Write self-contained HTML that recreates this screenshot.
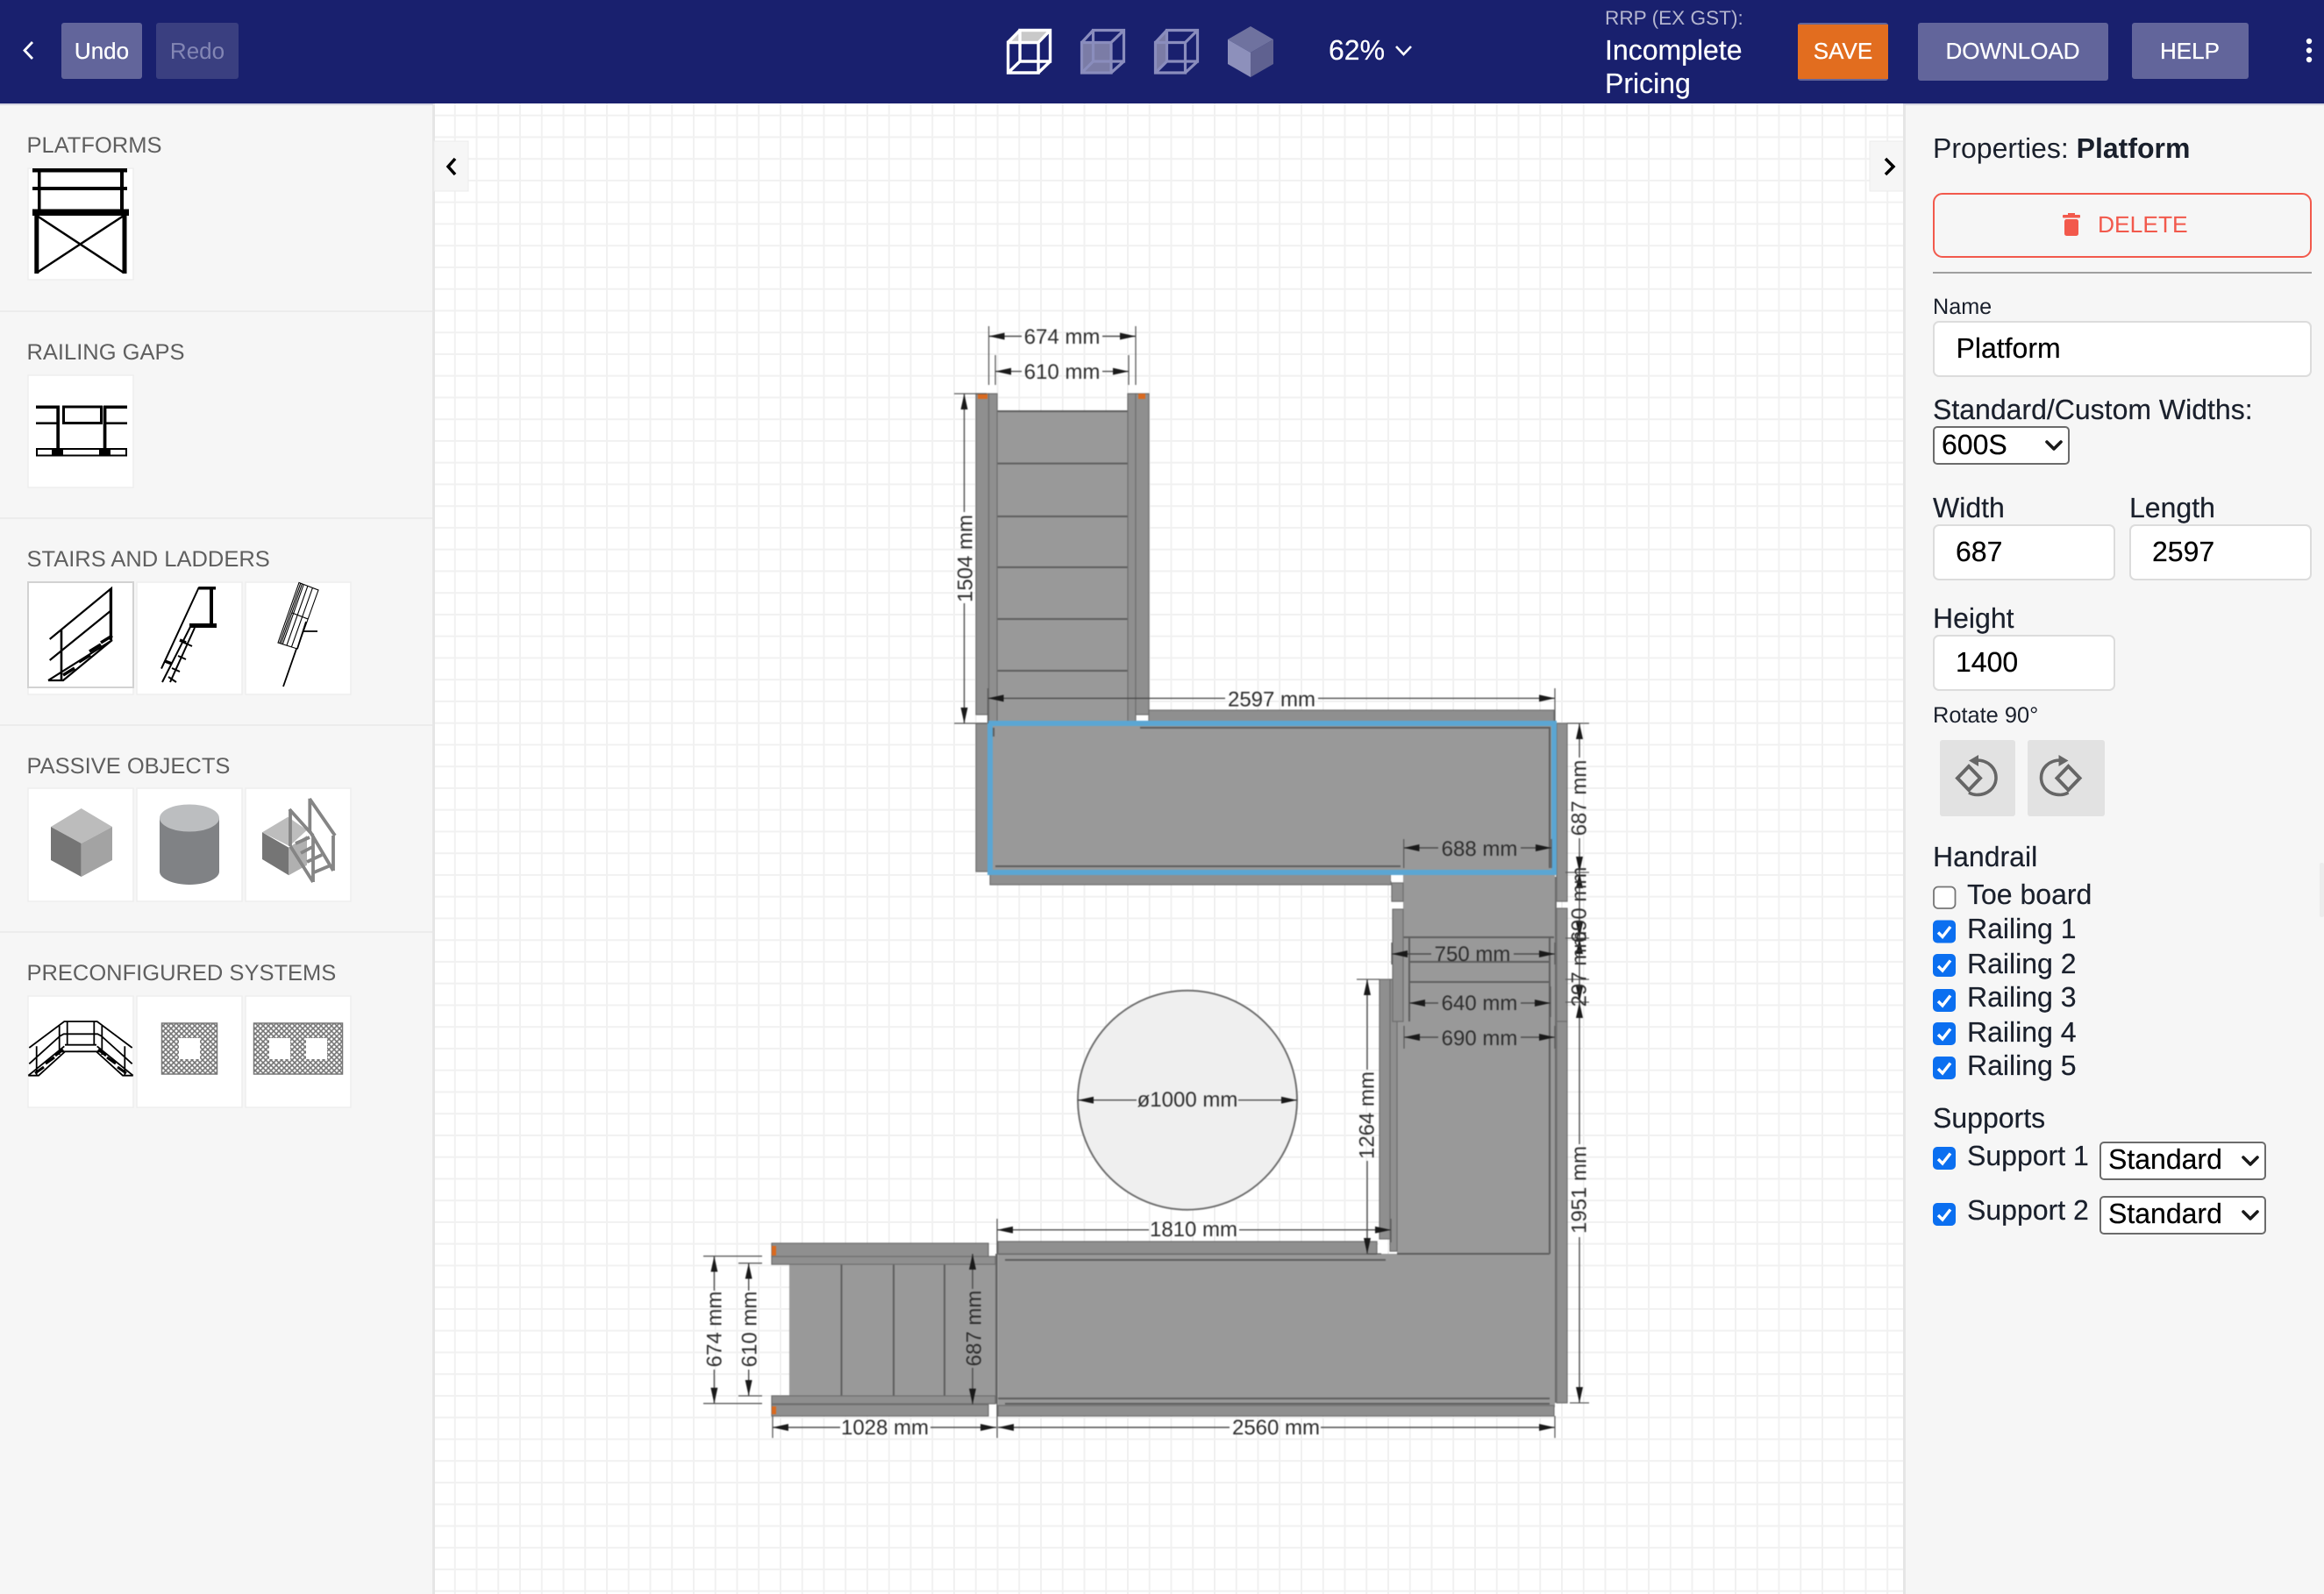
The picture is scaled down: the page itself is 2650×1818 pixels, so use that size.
<!DOCTYPE html>
<html lang="en"><head><meta charset="utf-8"><title>Platform configurator</title>
<style>
html,body{margin:0;padding:0;background:#fff}
body{width:2650px;height:1818px;overflow:hidden;position:relative;font-family:"Liberation Sans",sans-serif}
#grid{position:absolute;left:494px;top:118px;width:1678px;height:1700px;background-color:#fff;
background-image:linear-gradient(to right,#f1f1f1 2px,transparent 2px),linear-gradient(to bottom,#f1f1f1 2px,transparent 2px);
background-size:24.75px 24.75px;background-position:-1px 12.7px}
svg{position:absolute;left:0;top:0}
text{font-family:"Liberation Sans",sans-serif;text-rendering:geometricPrecision}
.h{font-size:25.5px;fill:#5f5f5f}
.w{fill:#fff;font-size:26px;stroke:#fff;stroke-width:.25px}
.l{font-size:32px;fill:#1a202c;stroke:#1a202c;stroke-width:.2px}
.v{font-size:32px;fill:#000;stroke:#000;stroke-width:.2px}
.tile{fill:#fff;stroke:#eeeeee;stroke-width:1.5}
.inp{fill:#fff;stroke:#dcdcdc;stroke-width:2}
.sel{fill:#fff;stroke:#6b6b6b;stroke-width:2}
.chev{fill:none;stroke:#1a1a1a;stroke-width:3.6;stroke-linecap:round;stroke-linejoin:round}
.k{stroke:#000;fill:none}
.band{fill:#8f8f8f;stroke:#6e6e6e;stroke-width:1.2}
.m{fill:#999;stroke:none}
.tr{stroke:#5e5e5e;stroke-width:2;fill:none}
.d{stroke:#4a4a4a;stroke-width:1.4;fill:none}
.x{stroke:#5a5a5a;stroke-width:1.3;fill:none}
.dt{font-size:24px;fill:#2e2e2e;text-anchor:middle}
</style></head><body>
<div id="grid"></div>
<svg width="2650" height="1818" viewBox="0 0 2650 1818" xmlns="http://www.w3.org/2000/svg">
<defs>
<marker id="a" markerUnits="userSpaceOnUse" markerWidth="18" markerHeight="8" refX="18" refY="4" orient="auto-start-reverse"><path d="M0 0L18 4L0 8z" fill="#1a1a1a"/></marker>
<pattern id="hatch" width="6" height="6" patternUnits="userSpaceOnUse"><rect width="6" height="6" fill="#fff"/><path d="M0 0L6 6M6 0L0 6" stroke="#777" stroke-width="1.6"/></pattern>
<g id="cb"><rect width="26" height="26" rx="5" fill="#0b6ff0"/><path d="M6 14L11 19L20 7.500" fill="none" stroke="#fff" stroke-width="3.400"/></g>
</defs>

<!-- left sidebar -->
<rect x="0" y="118" width="494" height="1700" fill="#f6f6f6"/>
<rect x="493" y="118" width="3" height="1700" fill="#e6e6e6"/>
<g fill="#ececec"><rect y="354" width="493" height="2"/><rect y="590" width="493" height="2"/><rect y="826" width="493" height="2"/><rect y="1062" width="493" height="2"/></g>
<text class="h" x="30.500" y="174">PLATFORMS</text>
<text class="h" x="30.500" y="410">RAILING GAPS</text>
<text class="h" x="30.500" y="646">STAIRS AND LADDERS</text>
<text class="h" x="30.500" y="882">PASSIVE OBJECTS</text>
<text class="h" x="30.500" y="1118">PRECONFIGURED SYSTEMS</text>
<rect class="tile" x="32" y="192" width="120" height="127"/>
<rect class="tile" x="32" y="428" width="120" height="128"/>
<rect class="tile" x="32" y="664" width="120" height="128"/><rect x="32" y="664" width="120" height="120" fill="#fff" stroke="#d2d2d2" stroke-width="2"/>
<rect class="tile" x="156" y="664" width="120" height="128"/><rect class="tile" x="280" y="664" width="120" height="128"/>
<rect class="tile" x="32" y="899" width="120" height="129"/><rect class="tile" x="156" y="899" width="120" height="129"/><rect class="tile" x="280" y="899" width="120" height="129"/>
<rect class="tile" x="32" y="1136" width="120" height="127"/><rect class="tile" x="156" y="1136" width="120" height="127"/><rect class="tile" x="280" y="1136" width="120" height="127"/>

<!-- platform icon -->
<g fill="#000"><rect x="37" y="192" width="108" height="4.500"/><rect x="37" y="213" width="108" height="4"/><rect x="43" y="196" width="3.500" height="44"/><rect x="137" y="196" width="4" height="44"/><rect x="37" y="238.500" width="110" height="7.500"/><rect x="39.300" y="246" width="5" height="66"/><rect x="139.500" y="246" width="5" height="66"/></g>
<path class="k" stroke-width="2.500" d="M42 246L141 311M141 246L42 311"/>
<!-- railing gap icon -->
<g fill="#000"><rect x="41" y="462.500" width="27" height="3.500"/><rect x="41" y="481.400" width="27" height="2.600"/><rect x="64.300" y="463" width="3.700" height="50"/><rect x="117.700" y="463" width="3.700" height="50"/><rect x="118" y="462.500" width="27" height="3.500"/><rect x="118" y="481.400" width="27" height="2.600"/><rect x="59" y="511" width="13" height="9"/><rect x="113" y="511" width="13" height="9"/></g>
<rect class="k" stroke-width="3" x="72.500" y="464" width="43" height="18.500"/>
<rect class="k" stroke-width="2" x="42" y="512" width="102" height="7.500"/>
<!-- stair icon 1 -->
<path class="k" stroke-width="2.200" d="M56.700 729L127 671V730M56.700 753L127 696M70 718V776M55 776L128 730M55 776H72L128 730"/>
<path class="k" stroke-width="3.500" d="M72 770L85 762M90 755L103 747M102 743L115 735M115 733L128 725"/>
<path class="k" stroke-width="2.500" d="M126 671V730M70 718V776"/>
<!-- stair icon 2 -->
<rect x="227" y="669" width="19" height="3.500"/><rect x="239" y="672" width="4" height="40"/><rect x="216" y="711" width="31" height="5"/>
<path class="k" stroke-width="2" d="M227 669.500L184 762.600M218 713L185 778M222 716L194 778M192 772L201 778M196 762L205 766M203 748L212 752M210 733L219 737"/>
<path class="k" stroke-width="3.500" d="M205 730L212 733M188 754L196 757"/>
<!-- stair icon 3 -->
<path class="k" stroke-width="1.100" d="M341 664.500L363 673L339 740L317 733zM342.800 665.200L318.800 733.600M344.500 665.900L320.500 734.100M346.300 666.500L322.300 734.700M350.900 668.300L326.900 736.200M356.400 670.500L332.400 737.900M333 699L350.700 705.800"/>
<path class="k" stroke-width="1.800" d="M338 740L323 783M345 720H362M349 709L339 740"/>
<!-- cube -->
<path d="M92.700 922L128 943L92.700 962L58 943z" fill="#bcbcbc"/><path d="M58 943L92.700 962V1000L58 981z" fill="#757575"/><path d="M92.700 962L128 943V981L92.700 1000z" fill="#a3a3a3"/>
<!-- cylinder -->
<path d="M182 933V994C182 1002 197 1009 216 1009S250 1002 250 994V933z" fill="#808285"/><ellipse cx="216" cy="933" rx="34" ry="15.500" fill="#bcbec0"/>
<!-- cube + stairs -->
<path d="M299 949.300L328.300 931.700L350 946.700L330 965z" fill="#bdbdbd"/><path d="M299 949.300L329.300 966.700V998.300L299 980z" fill="#757575"/><path d="M329.300 966.700L350 953V986.700L329.300 998.300z" fill="#b0b0b0"/>
<path fill="none" stroke="#858585" stroke-width="3.800" d="M331 923V965M353.300 910.700V948M330 923L357 953M353 911L382 953M331 965L357 1006M353.300 948L380 993M357 953V1006M380 953V993M337 962L353 955M343 973L358 965M350 983L367 975M358 995L377 987"/>
<!-- preconfigured 1 -->
<g id="pc"><path class="k" stroke-width="1.800" d="M33.300 1195L73.300 1165H92M33.300 1213.300L68.300 1181.700L72.700 1179.300H92M41.700 1193.300V1226.700M67.700 1170V1203M76.700 1165V1192M32.300 1226.700L73.300 1193.300M32.300 1226.700H44L74 1199.500M74 1191.700H92M70 1199.300H92"/><path class="k" stroke-width="3" d="M40 1224L50 1217M52 1213L62 1206M63 1204L72 1197"/></g>
<use href="#pc" transform="translate(184 0) scale(-1 1)"/>
<!-- mesh -->
<rect x="184.500" y="1167" width="63" height="58" fill="url(#hatch)" stroke="#777" stroke-width="1.500"/><rect x="204" y="1184" width="24" height="24" fill="#fff"/>
<rect x="289.500" y="1167" width="101" height="58" fill="url(#hatch)" stroke="#777" stroke-width="1.500"/><rect x="307" y="1184" width="24" height="24" fill="#fff"/><rect x="349" y="1184" width="24" height="24" fill="#fff"/>

<!-- collapse tabs -->
<rect x="495" y="161" width="39" height="57" fill="#f6f6f6" stroke="#ececec"/>
<path d="M519 181L511 190L519 199" fill="none" stroke="#000" stroke-width="3.500"/>
<rect x="2132" y="161" width="39" height="57" fill="#f6f6f6" stroke="#ececec"/>
<path d="M2150 181L2159 190L2150 199" fill="none" stroke="#000" stroke-width="3.500"/>

<!-- drawing -->
<g style="filter:blur(.6px)">
<!-- top stair -->
<rect class="m" x="1137" y="469" width="149" height="356"/><path class="tr" d="M1137 469H1286"/>
<path class="tr" d="M1137 528.600H1286M1137 589H1286M1137 647H1286M1137 706H1286M1137 765H1286"/>
<rect class="band" x="1113" y="449" width="14.500" height="366"/><rect class="band" x="1127.500" y="449" width="9.500" height="376"/>
<rect class="band" x="1286" y="449" width="9" height="376"/><rect class="band" x="1295" y="449" width="15" height="366"/>
<rect x="1115" y="449" width="11" height="6" fill="#d9691f"/><rect x="1298" y="449" width="8" height="6" fill="#d9691f"/>
<rect x="1300" y="816" width="10" height="8" fill="#fff"/>
<!-- upper platform -->
<rect class="band" x="1310" y="810" width="462" height="15"/>
<rect class="band" x="1113" y="825" width="16" height="169"/>
<rect class="m" x="1129" y="825" width="643" height="170"/>
<rect class="band" x="1129" y="995" width="457" height="14"/>
<path class="tr" d="M1300 830H1767V990M1133 830V840M1135 988H1597"/>
<rect class="band" x="1775" y="825" width="12" height="203"/>
<!-- vertical run -->
<rect class="m" x="1600" y="995" width="173" height="175"/>
<rect class="m" x="1593" y="1165" width="180" height="265"/>
<path class="tr" d="M1600 1069H1772M1607 1097H1767M1607 1120H1767M1607 1069V1165M1767 1069V1595"/>
<rect x="1586" y="995" width="14" height="10" fill="#fff"/>
<rect class="band" x="1587" y="1007" width="13" height="21"/>
<rect class="band" x="1585" y="1117" width="8" height="310"/>
<rect class="band" x="1588" y="1037" width="12" height="128"/>
<rect x="1773" y="1000" width="2" height="600" fill="#6e6e6e"/>
<rect class="band" x="1775" y="1036" width="12" height="129"/>
<rect class="band" x="1775" y="1165" width="12" height="435"/>
<rect class="band" x="1573" y="1117" width="12" height="296"/>
<!-- lower platform -->
<rect class="m" x="1138" y="1430" width="635" height="175"/>
<path class="tr" d="M1593 1430H1767M1138 1430H1570M1146 1437H1580M1138 1595H1767M1146 1601H1767"/>
<rect class="band" x="1138" y="1416" width="432" height="14"/>
<rect class="band" x="1138" y="1603" width="634" height="12"/>
<rect x="1572" y="1415" width="10" height="12" fill="#fff"/>
<!-- left stair -->
<rect class="m" x="900" y="1442" width="236" height="150"/>
<path class="tr" d="M959.500 1442V1592M1019 1442V1592M1077 1442V1592"/>
<rect class="band" x="880" y="1433" width="255" height="9"/><rect class="band" x="880" y="1592" width="255" height="9"/>
<rect class="band" x="880" y="1418" width="247" height="15"/><rect class="band" x="880" y="1602" width="247" height="13"/>
<rect x="880" y="1421" width="5" height="11" fill="#d9691f"/><rect x="880" y="1604" width="5" height="9" fill="#d9691f"/>
<path d="M1136 1430V1601" stroke="#6a6a6a" stroke-width="2"/>
<!-- selection -->
<rect x="1129" y="825" width="643" height="170" fill="none" stroke="#5ba6d3" stroke-width="6"/>
<!-- circle -->
<circle cx="1354" cy="1254.700" r="125" fill="#efefef" stroke="#6e6e6e" stroke-width="2"/>
<!-- extension lines -->
<path class="x" d="M1127.500 372V439M1295 372V439M1135 405V439M1287 405V439M1088 449H1125M1088 825H1125M1773 785V822M1126.500 785V825M1787 825H1812M1785 995H1812M1785 1070H1812M1785 1117H1812M1785 1143H1812M1790 1600H1812M1600.700 957V990M1769 957V990M1587 1075V1100M1773 1075V1100M1607 1125V1160M1768 1125V1160M1601 1170V1196M1773 1170V1196M1547 1117H1573M1559 1430H1575M1137 1390V1640M1586 1390V1417M881 1615V1640M1773 1615V1640M802 1432.700H869M802 1600.700H869M842 1440.700H869M842 1592H869"/>
<!-- dimension lines -->
<g class="d">
<path marker-start="url(#a)" d="M1127.500 383.500H1165"/><path marker-end="url(#a)" d="M1257 383.500H1295"/>
<path marker-start="url(#a)" d="M1135 423.600H1165"/><path marker-end="url(#a)" d="M1257 423.600H1287"/>
<path marker-start="url(#a)" d="M1099.500 449V584"/><path marker-end="url(#a)" d="M1099.500 688V825"/>
<path marker-start="url(#a)" d="M1126.500 796.400H1397"/><path marker-end="url(#a)" d="M1503 796.400H1773"/>
<path marker-start="url(#a)" d="M1801 825V864"/><path marker-end="url(#a)" d="M1801 956V995"/>
<path marker-start="url(#a)" d="M1600.700 967H1640"/><path marker-end="url(#a)" d="M1734 967H1769"/>
<path marker-start="url(#a)" d="M1587 1088H1632"/><path marker-end="url(#a)" d="M1726 1088H1773"/>
<path marker-start="url(#a)" d="M1607 1144H1640"/><path marker-end="url(#a)" d="M1734 1144H1768"/>
<path marker-start="url(#a)" d="M1601 1183H1640"/><path marker-end="url(#a)" d="M1734 1183H1773"/>
<path marker-start="url(#a)" marker-end="url(#a)" d="M1801 995V1070"/>
<path marker-start="url(#a)" marker-end="url(#a)" d="M1801 1070V1143"/>
<path marker-start="url(#a)" d="M1801 1143V1305"/><path marker-end="url(#a)" d="M1801 1411V1600"/>
<path marker-start="url(#a)" d="M1559 1117V1220"/><path marker-end="url(#a)" d="M1559 1324V1430"/>
<path marker-start="url(#a)" d="M1137 1402.700H1310"/><path marker-end="url(#a)" d="M1413 1402.700H1586"/>
<path marker-start="url(#a)" d="M881 1628H958"/><path marker-end="url(#a)" d="M1061 1628H1136"/>
<path marker-start="url(#a)" d="M1138 1628H1402"/><path marker-end="url(#a)" d="M1506 1628H1773"/>
<path marker-start="url(#a)" d="M814.400 1432.700V1472"/><path marker-end="url(#a)" d="M814.400 1562V1600.700"/>
<path marker-start="url(#a)" d="M853.700 1440.700V1472"/><path marker-end="url(#a)" d="M853.700 1562V1592"/>
<path marker-start="url(#a)" d="M1109 1430V1470"/><path marker-end="url(#a)" d="M1109 1560V1601.700"/>
<path marker-start="url(#a)" d="M1229 1254.700H1296"/><path marker-end="url(#a)" d="M1412 1254.700H1479"/>
</g>
<!-- dimension text -->
<text class="dt" x="1211" y="392">674 mm</text>
<text class="dt" x="1211" y="432">610 mm</text>
<text class="dt" x="1450" y="805.500">2597 mm</text>
<text class="dt" x="1687" y="976">688 mm</text>
<text class="dt" x="1679" y="1096">750 mm</text>
<text class="dt" x="1687" y="1152">640 mm</text>
<text class="dt" x="1687" y="1192">690 mm</text>
<text class="dt" x="1361" y="1410">1810 mm</text>
<text class="dt" x="1009" y="1636">1028 mm</text>
<text class="dt" x="1455" y="1636">2560 mm</text>
<text class="dt" x="1354" y="1262">ø1000 mm</text>
<text class="dt" transform="translate(1100 637) rotate(-90)" dy=".35em">1504 mm</text>
<text class="dt" transform="translate(1800 910) rotate(-90)" dy=".35em">687 mm</text>
<text class="dt" transform="translate(1800 1032) rotate(-90)" dy=".35em">690 mm</text>
<text class="dt" transform="translate(1800 1105) rotate(-90)" dy=".35em">297 mm</text>
<text class="dt" transform="translate(1800 1357) rotate(-90)" dy=".35em">1951 mm</text>
<text class="dt" transform="translate(1558 1272) rotate(-90)" dy=".35em">1264 mm</text>
<text class="dt" transform="translate(814 1516) rotate(-90)" dy=".35em">674 mm</text>
<text class="dt" transform="translate(854 1516) rotate(-90)" dy=".35em">610 mm</text>
<text class="dt" transform="translate(1110 1515) rotate(-90)" dy=".35em">687 mm</text>
</g>

<!-- right panel -->
<rect x="2170" y="118" width="480" height="1700" fill="#f6f6f6"/>
<rect x="2170" y="118" width="3" height="1700" fill="#e6e6e6"/>
<rect x="2645" y="984" width="5" height="62" rx="2" fill="#ececec"/>
<text x="2204" y="180" font-size="32" fill="#1a202c">Properties: <tspan font-weight="700">Platform</tspan></text>
<rect x="2205" y="221" width="430" height="72" rx="10" fill="none" stroke="#f2594c" stroke-width="2"/>
<g fill="#f2594c"><rect x="2352" y="245" width="20" height="3.500" rx="1"/><rect x="2358" y="243" width="8" height="3"/><rect x="2354" y="250" width="16" height="19" rx="2.500"/></g>
<text x="2392" y="265" font-size="26.400" fill="#f2594c">DELETE</text>
<rect x="2204" y="310" width="432" height="2" fill="#a0a0a0"/>
<text x="2204" y="358" font-size="25.200px" fill="#1a202c">Name</text>
<rect class="inp" x="2205" y="367" width="430" height="62" rx="6"/>
<text class="v" x="2230.500" y="408">Platform</text>
<text class="l" x="2204" y="478">Standard/Custom Widths:</text>
<rect class="sel" x="2205" y="487" width="154" height="42" rx="4"/>
<text class="v" x="2214" y="518">600S</text>
<path class="chev" d="M2334 504L2342 512L2350 504"/>
<text class="l" x="2204" y="590">Width</text>
<text class="l" x="2428" y="590">Length</text>
<rect class="inp" x="2205" y="599" width="206" height="62" rx="6"/>
<rect class="inp" x="2429" y="599" width="206" height="62" rx="6"/>
<text class="v" x="2230" y="640">687</text>
<text class="v" x="2454" y="640">2597</text>
<text class="l" x="2204" y="716">Height</text>
<rect class="inp" x="2205" y="725" width="206" height="62" rx="6"/>
<text class="v" x="2230" y="766">1400</text>
<text x="2204" y="824" font-size="25.400px" fill="#1a202c">Rotate 90°</text>
<rect x="2212" y="844" width="86" height="87" rx="3" fill="#e2e2e2"/>
<rect x="2312" y="844" width="88" height="87" rx="3" fill="#e2e2e2"/>
<g id="rot"><path d="M2232 887.500L2245 874L2258 887.500L2245 901z" fill="none" stroke="#666" stroke-width="4"/><path d="M2254 867C2267 867 2276 876 2276 887S2267 906.500 2254 906.500C2250 906.500 2247 905 2245 904" fill="none" stroke="#666" stroke-width="3.600"/><path d="M2256 861L2245 867.500L2256 874z" fill="#666"/></g>
<use href="#rot" transform="translate(4603.500 0) scale(-1 1)"/>
<text class="l" x="2204" y="988">Handrail</text>
<rect x="2205" y="1011.500" width="24.500" height="24.500" rx="5" fill="#fff" stroke="#767676" stroke-width="1.800"/>
<text class="l" x="2243" y="1031">Toe board</text>
<use href="#cb" x="2204" y="1049.500"/><text class="l" x="2243" y="1070">Railing 1</text>
<use href="#cb" x="2204" y="1088"/><text class="l" x="2243" y="1110">Railing 2</text>
<use href="#cb" x="2204" y="1128"/><text class="l" x="2243" y="1148">Railing 3</text>
<use href="#cb" x="2204" y="1166"/><text class="l" x="2243" y="1188">Railing 4</text>
<use href="#cb" x="2204" y="1205"/><text class="l" x="2243" y="1226">Railing 5</text>
<text class="l" x="2204" y="1286">Supports</text>
<use href="#cb" x="2204" y="1308"/><text class="l" x="2243" y="1329">Support 1</text>
<use href="#cb" x="2204" y="1372"/><text class="l" x="2243" y="1391">Support 2</text>
<rect class="sel" x="2395" y="1303" width="188" height="42" rx="4"/><text class="v" x="2404" y="1333">Standard</text><path class="chev" d="M2558 1320L2566 1328L2574 1320"/>
<rect class="sel" x="2395" y="1365" width="188" height="42" rx="4"/><text class="v" x="2404" y="1395">Standard</text><path class="chev" d="M2558 1382L2566 1390L2574 1382"/>

<!-- header -->
<rect width="2650" height="118" fill="#19206e"/>
<rect y="118" width="494" height="2" fill="#d6d6e2"/><rect x="2170" y="118" width="480" height="2" fill="#d6d6e2"/>
<path d="M37 48L28 57.500L37 67" fill="none" stroke="#fff" stroke-width="2.800"/>
<rect x="70" y="26" width="92" height="64" rx="3" fill="#62659b"/><text class="w" x="116" y="67" text-anchor="middle">Undo</text>
<rect x="178" y="26" width="94" height="64" rx="3" fill="#3a3f80"/><text x="225" y="67" text-anchor="middle" font-size="26" fill="#8386b4">Redo</text>
<!-- view icons -->
<path d="M1148 47L1162 33H1199L1185 47z" fill="#c9c9c9"/>
<path d="M1149.500 48.500H1184V83H1149.500zM1163 34.500H1197.500V70H1163zM1149.500 48.500L1163 34.500M1184 48.500L1197.500 34.500M1149.500 83L1163 70M1184 83L1197.500 70" fill="none" stroke="#fff" stroke-width="3.400"/>
<path d="M1233.500 48.500H1267V83H1233.500z" fill="#7b7ca6"/>
<path d="M1233.500 48.500H1267V83H1233.500zM1246.500 34.500H1281.500V70H1246.500zM1233.500 48.500L1246.500 34.500M1267 48.500L1281.500 34.500M1233.500 83L1246.500 70M1267 83L1281.500 70" fill="none" stroke="#8a8dbd" stroke-width="3.200"/>
<path d="M1317.500 48.500L1330.500 34.500V70L1317.500 83z" fill="#7b7ca6"/>
<path d="M1317.500 48.500H1351.500V83H1317.500zM1330.500 34.500H1365.500V70H1330.500zM1317.500 48.500L1330.500 34.500M1351.500 48.500L1365.500 34.500M1317.500 83L1330.500 70M1351.500 83L1365.500 70" fill="none" stroke="#8a8dbd" stroke-width="3.200"/>
<path d="M1426 30L1452 45L1426 60L1400 45z" fill="#6f729f"/><path d="M1400 45L1426 60V88L1400 73z" fill="#8d90bb"/><path d="M1426 60L1452 45V73L1426 88z" fill="#5f6190"/>
<text x="1515" y="68" font-size="32" fill="#fff" stroke="#fff" stroke-width=".2">62%</text>
<path d="M1592 53L1600.500 62L1609 53" fill="none" stroke="#fff" stroke-width="2.600"/>
<text x="1830" y="28" font-size="22.600" fill="#b4b5cf">RRP (EX GST):</text>
<text x="1830" y="68" font-size="32" fill="#fff" stroke="#fff" stroke-width=".2">Incomplete</text>
<text x="1830" y="106" font-size="32" fill="#fff" stroke="#fff" stroke-width=".2">Pricing</text>
<rect x="2050" y="26" width="103" height="66" rx="3" fill="#62659b"/><rect x="2050" y="28" width="103" height="62" fill="#e26d1f"/><text class="w" x="2101.500" y="67" text-anchor="middle">SAVE</text>
<rect x="2187" y="26" width="217" height="66" rx="3" fill="#62659b"/><text class="w" x="2295" y="67" text-anchor="middle">DOWNLOAD</text>
<rect x="2431" y="26" width="133" height="64" rx="3" fill="#62659b"/><text class="w" x="2497" y="67" text-anchor="middle">HELP</text>
<g fill="#fff"><circle cx="2633" cy="47" r="3.200"/><circle cx="2633" cy="57.500" r="3.200"/><circle cx="2633" cy="68" r="3.200"/></g>
</svg>
</body></html>
